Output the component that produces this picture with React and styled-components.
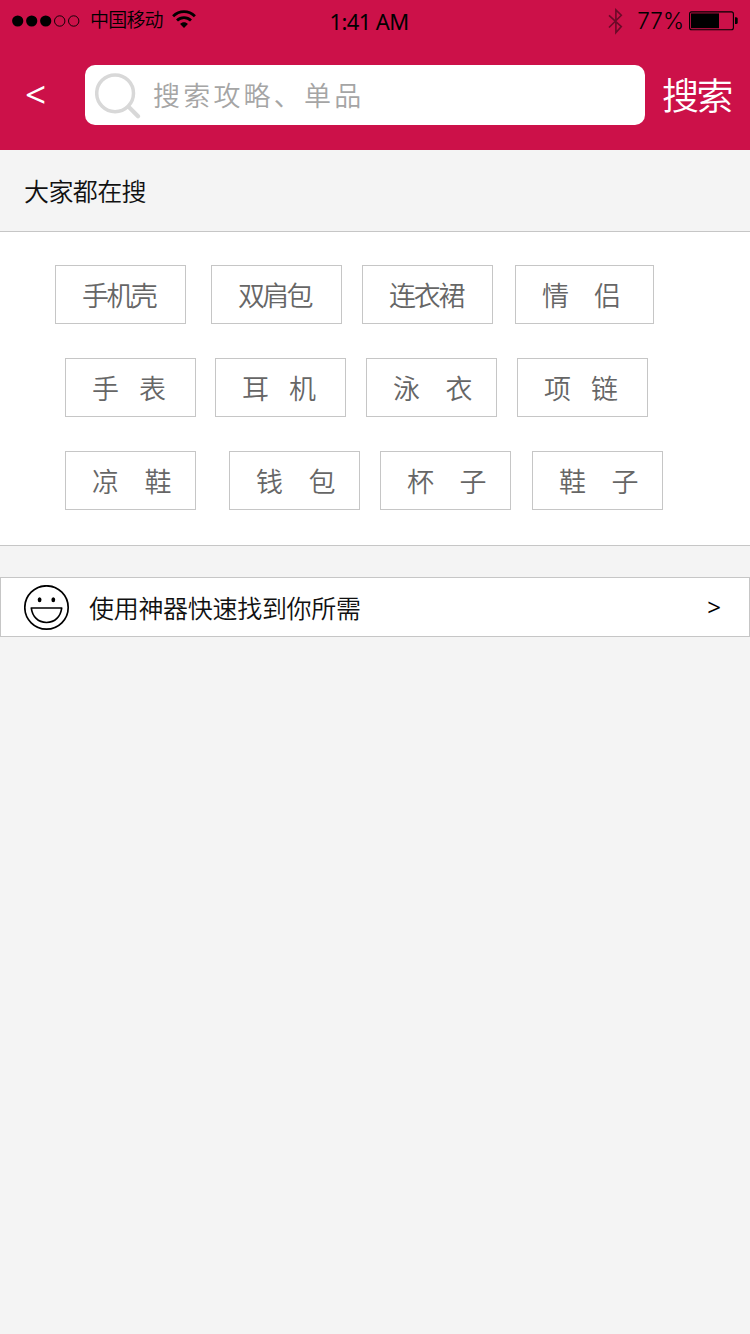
import React from "react";
import styled, { createGlobalStyle } from "styled-components";

const tagRows = [
  {
    indent: 55,
    tags: [
      { label: "手机壳", spacing: -2.6 },
      { label: "双肩包", spacing: -2.8, before: 25 },
      { label: "连衣裙", spacing: -2.2, before: 20 },
      { label: "情 侣", gap: 19, before: 22, width: 139 },
    ],
  },
  {
    indent: 65,
    tags: [
      { label: "手 表", gap: 14 },
      { label: "耳 机", gap: 14, before: 19 },
      { label: "泳 衣", gap: 19.5, before: 20 },
      { label: "项 链", gap: 14, before: 20 },
    ],
  },
  {
    indent: 65,
    tags: [
      { label: "凉 鞋", gap: 19.5 },
      { label: "钱 包", gap: 19.5, before: 33 },
      { label: "杯 子", gap: 19.5, before: 20 },
      { label: "鞋 子", gap: 19.5, before: 21 },
    ],
  },
];

const SignalIcon = () => (
  <svg width="68" height="12" viewBox="0 0 68 12">
    <circle cx="5.7" cy="6" r="5.6" />
    <circle cx="19.7" cy="6" r="5.6" />
    <circle cx="33.7" cy="6" r="5.6" />
    <circle cx="47.7" cy="6" r="5.2" fill="none" stroke="#000" strokeWidth="0.9" />
    <circle cx="61.7" cy="6" r="5.2" fill="none" stroke="#000" strokeWidth="0.9" />
  </svg>
);

const WifiIcon = () => (
  <svg width="24" height="18" viewBox="0 0 24 18">
    <g fill="none" stroke="#000" strokeWidth="2.8">
      <path d="M1.1 6.2C7.2 0 16.8 0 22.9 6.2" />
      <path d="M5 10.5C9 6.6 15 6.6 19 10.5" />
    </g>
    <path d="M8.1 14C10.2 11.6 13.8 11.6 15.9 14L12 18Z" />
  </svg>
);

const BluetoothIcon = () => (
  <svg width="15" height="27" viewBox="0 0 15 27">
    <path
      d="M1 7.3L13.3 18.6L7.9 24.6V2L13.3 7.3L1 19.5"
      fill="none"
      stroke="#6b0a28"
      strokeWidth="1.6"
    />
  </svg>
);

const BatteryIcon = () => (
  <svg width="49" height="20" viewBox="0 0 49 20">
    <rect x="0.6" y="0.9" width="43.8" height="17.8" rx="2" fill="none" stroke="#000" strokeWidth="1.1" />
    <rect x="2" y="2.4" width="28" height="14.8" />
    <path d="M46 6.3H47.2Q48.7 6.3 48.7 7.8V11.6Q48.7 13.1 47.2 13.1H46Z" />
  </svg>
);

const SearchIcon = () => (
  <svg width="46" height="46" viewBox="0 0 46 46" fill="none" stroke="#d8d8d8">
    <circle cx="20.1" cy="20.3" r="18.4" strokeWidth="3.5" />
    <path d="M33.8 34L43 43.2" strokeWidth="4.2" strokeLinecap="round" />
  </svg>
);

const SmileIcon = () => (
  <svg width="46" height="46" viewBox="0 0 46 46">
    <g fill="none" stroke="#000" strokeWidth="1.7" strokeLinejoin="round">
      <circle cx="22.5" cy="22.5" r="21.7" />
      <path d="M7.3 23H37.7C36.7 31.5 31 37.5 22.5 37.5S8.3 31.5 7.3 23Z" />
    </g>
    <ellipse cx="15.6" cy="14.8" rx="1.9" ry="2.5" />
    <ellipse cx="29.3" cy="14.8" rx="1.9" ry="2.5" />
  </svg>
);

const App = () => {
  return (
    <Page>
      <GlobalStyle />
      <Header>
        <StatusBar>
          <StatusLeft>
            <SignalIcon />
            <Carrier>中国移动</Carrier>
            <WifiIcon />
          </StatusLeft>
          <Clock>1:41 AM</Clock>
          <StatusRight>
            <BluetoothIcon />
            <Percent>77%</Percent>
            <BatteryIcon />
          </StatusRight>
        </StatusBar>
        <SearchBar>
          <BackButton>&lt;</BackButton>
          <SearchField>
            <SearchIcon />
            <Placeholder>搜索攻略、单品</Placeholder>
          </SearchField>
          <SearchButton>搜索</SearchButton>
        </SearchBar>
      </Header>
      <SectionTitle>大家都在搜</SectionTitle>
      <TagPanel>
        {tagRows.map((row, i) => (
          <TagRow key={i} $indent={row.indent}>
            {row.tags.map((tag) => (
              <Tag
                key={tag.label}
                $before={tag.before}
                $width={tag.width}
                $spacing={tag.spacing}
                $gap={tag.gap}
              >
                {tag.label}
              </Tag>
            ))}
          </TagRow>
        ))}
      </TagPanel>
      <ToolLink>
        <SmileIcon />
        <ToolText>使用神器快速找到你所需</ToolText>
        <Arrow>&gt;</Arrow>
      </ToolLink>
    </Page>
  );
};

export default App;

const GlobalStyle = createGlobalStyle`
  * {
    box-sizing: border-box;
  }

  body {
    margin: 0;
    background: #f4f4f4;
  }

  button {
    padding: 0;
    border: 0;
    background: none;
    font: inherit;
    color: inherit;
  }

  svg {
    display: block;
    flex-shrink: 0;
  }
`;

const Page = styled.div`
  width: 750px;
  min-height: 1334px;
  background: #f4f4f4;
  color: #111;
  font-family: "Noto Sans CJK SC DemiLight", "Noto Sans CJK SC", sans-serif;
  font-weight: 350;
  white-space: nowrap;
`;

const Header = styled.header`
  height: 150px;
  background: #cc1149;
`;

const StatusBar = styled.div`
  height: 42px;
  padding: 0 12px;
  display: grid;
  grid-template-columns: 1fr auto 1fr;
  align-items: center;
  color: #000;
`;

const StatusLeft = styled.div`
  display: flex;
  align-items: center;

  svg:last-child {
    margin: -5px 0 0 9px;
  }
`;

const Carrier = styled.span`
  margin-left: 10px;
  font-size: 19px;
  line-height: 28px;
  letter-spacing: -0.8px;
  margin-top: -4px;
`;

const Clock = styled.span`
  margin: -1px 12px 0 0;
  font-family: "Noto Sans", "Open Sans", sans-serif;
  font-size: 22px;
  font-weight: 400;
  line-height: 30px;
  letter-spacing: -0.6px;
`;

const StatusRight = styled.div`
  display: flex;
  align-items: center;
  justify-content: flex-end;
`;

const Percent = styled.span`
  margin: 0 5px 0 14px;
  font-family: Inter, "Liberation Sans", sans-serif;
  font-size: 22.5px;
  font-weight: 300;
  line-height: 30px;
`;

const SearchBar = styled.div`
  height: 106px;
  display: flex;
  align-items: center;
  color: #fff;
`;

const BackButton = styled.button`
  width: 85px;
  margin-top: -3px;
  padding-left: 25px;
  text-align: left;
  font-family: "Open Sans", sans-serif;
  font-size: 37px;
  font-weight: 500;
  line-height: 60px;
`;

const SearchField = styled.div`
  width: 560px;
  height: 60px;
  padding-left: 10px;
  display: flex;
  align-items: center;
  border-radius: 10px;
  background: #fff;

  svg {
    margin-top: 2px;
  }
`;

const Placeholder = styled.span`
  margin: -2px 0 0 12px;
  color: #a5a5a5;
  font-size: 27px;
  letter-spacing: 3.2px;
`;

const SearchButton = styled.button`
  margin: -2px 0 0 17px;
  font-size: 37px;
  line-height: 60px;
  letter-spacing: -2.5px;
`;

const SectionTitle = styled.h2`
  height: 82px;
  margin: 0;
  padding-left: 24px;
  border-bottom: 1px solid #c6c6c6;
  font-size: 25px;
  font-weight: inherit;
  line-height: 80px;
  letter-spacing: -0.6px;
`;

const TagPanel = styled.section`
  height: 314px;
  padding-top: 33px;
  display: flex;
  flex-direction: column;
  gap: 34px;
  border-bottom: 1px solid #c6c6c6;
  background: #fff;
`;

const TagRow = styled.div`
  padding-left: ${({ $indent }) => $indent}px;
  display: flex;
`;

const Tag = styled.button`
  && {
    width: ${({ $width = 131 }) => $width}px;
    height: 59px;
    margin-left: ${({ $before = 0 }) => $before}px;
    padding: 1px 0 0 26px;
    border: 1px solid #c6c6c6;
    color: #666;
    font-size: 27px;
    line-height: 56px;
    text-align: left;
    letter-spacing: ${({ $spacing = 0 }) => $spacing}px;
    word-spacing: ${({ $gap = 0 }) => $gap}px;
  }
`;

const ToolLink = styled.div`
  height: 60px;
  margin-top: 31px;
  padding: 1px 28px 0 23px;
  display: flex;
  align-items: center;
  border: 1px solid #c6c6c6;
  background: #fff;
`;

const ToolText = styled.span`
  margin: -2px 0 0 19px;
  font-size: 25px;
  letter-spacing: -0.3px;
`;

const Arrow = styled.span`
  margin: -3px 0 0 auto;
  color: #000;
  font-family: "Open Sans", sans-serif;
  font-size: 24px;
  font-weight: 500;
`;
